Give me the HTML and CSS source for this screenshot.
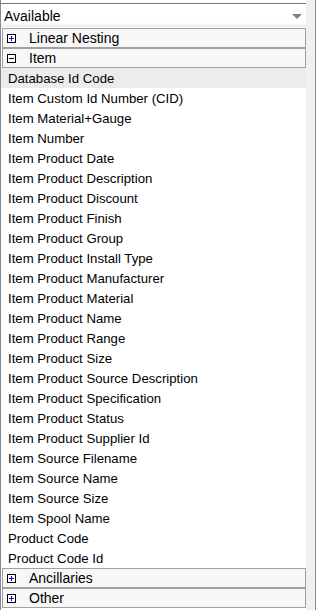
FILE: index.html
```html
<!DOCTYPE html>
<html lang="en">
<head>
    <meta charset="UTF-8">
    <title>Available Fields</title>
    <link rel="stylesheet" href="styles.css">
</head>
<body>
    <div class="panel">
        <div class="combo">
            <span class="combo-text">Available</span>
            <span class="combo-arrow"></span>
        </div>
        <div class="group">
            <span class="toggle plus"></span>
            <span>Linear Nesting</span>
        </div>
        <div class="group">
            <span class="toggle minus"></span>
            <span>Item</span>
        </div>
        <ul class="fields">
            <li class="hover">Database Id Code</li>
            <li>Item Custom Id Number (CID)</li>
            <li>Item Material+Gauge</li>
            <li>Item Number</li>
            <li>Item Product Date</li>
            <li>Item Product Description</li>
            <li>Item Product Discount</li>
            <li>Item Product Finish</li>
            <li>Item Product Group</li>
            <li>Item Product Install Type</li>
            <li>Item Product Manufacturer</li>
            <li>Item Product Material</li>
            <li>Item Product Name</li>
            <li>Item Product Range</li>
            <li>Item Product Size</li>
            <li>Item Product Source Description</li>
            <li>Item Product Specification</li>
            <li>Item Product Status</li>
            <li>Item Product Supplier Id</li>
            <li>Item Source Filename</li>
            <li>Item Source Name</li>
            <li>Item Source Size</li>
            <li>Item Spool Name</li>
            <li>Product Code</li>
            <li>Product Code Id</li>
        </ul>
        <div class="group">
            <span class="toggle plus"></span>
            <span>Ancillaries</span>
        </div>
        <div class="group">
            <span class="toggle plus"></span>
            <span>Other</span>
        </div>
    </div>
    <div class="splitter"></div>
    <div class="right-pane"></div>
</body>
</html>
```

FILE: styles.css
```css
html, body {
    margin: 0;
    padding: 0;
    height: 100%;
}

body {
    display: flex;
    background-color: #f0f0f0;
    font-family: 'Liberation Sans', Arial, sans-serif;
    font-size: 13.2px;
    color: #000;
    overflow: hidden;
}

.panel {
    width: 305px;
    flex: none;
    background-color: #fff;
    border-left: 1px solid #828790;
    padding-top: 3px;
}

.combo {
    display: flex;
    align-items: center;
    height: 23px;
    margin-bottom: 1px;
    border-top: 1px solid #7a7a7a;
    background: linear-gradient(#fff 0, #fff 19px, #e9e9e9 23px);
    padding-left: 3px;
    padding-right: 4px;
    font-size: 14px;
}

.combo-text {
    flex: 1;
}

.combo-arrow {
    width: 0;
    height: 0;
    border-left: 5px solid transparent;
    border-right: 5px solid transparent;
    border-top: 5px solid #808080;
    margin-top: 1px;
}

.group {
    display: flex;
    align-items: center;
    height: 18px;
    margin-left: 1px;
    border: 1px solid #a0a0a0;
    background-color: #f7f7f7;
    font-size: 14px;
}

.toggle {
    position: relative;
    width: 7px;
    height: 7px;
    border: 1px solid #000;
    margin-left: 4px;
    margin-right: 13px;
    background-color: #fff;
}

.toggle::before,
.toggle::after {
    content: '';
    position: absolute;
    background-color: #0000ff;
}

.toggle::before {
    left: 1px;
    top: 3px;
    width: 5px;
    height: 1px;
}

.toggle.plus::after {
    left: 3px;
    top: 1px;
    width: 1px;
    height: 5px;
}

.toggle.minus::before {
    background-color: #000;
}

.fields {
    list-style: none;
    margin: 0;
    padding: 0;
}

.fields li {
    height: 19px;
    line-height: 19px;
    padding-top: 1px;
    padding-left: 7px;
    white-space: nowrap;
}

.fields li.hover {
    background-color: #ececec;
}

.splitter {
    width: 9px;
    flex: none;
    background-color: #f0f0f0;
}

.right-pane {
    flex: 1;
    border-left: 1px solid #828790;
    background-color: #fff;
}
```
